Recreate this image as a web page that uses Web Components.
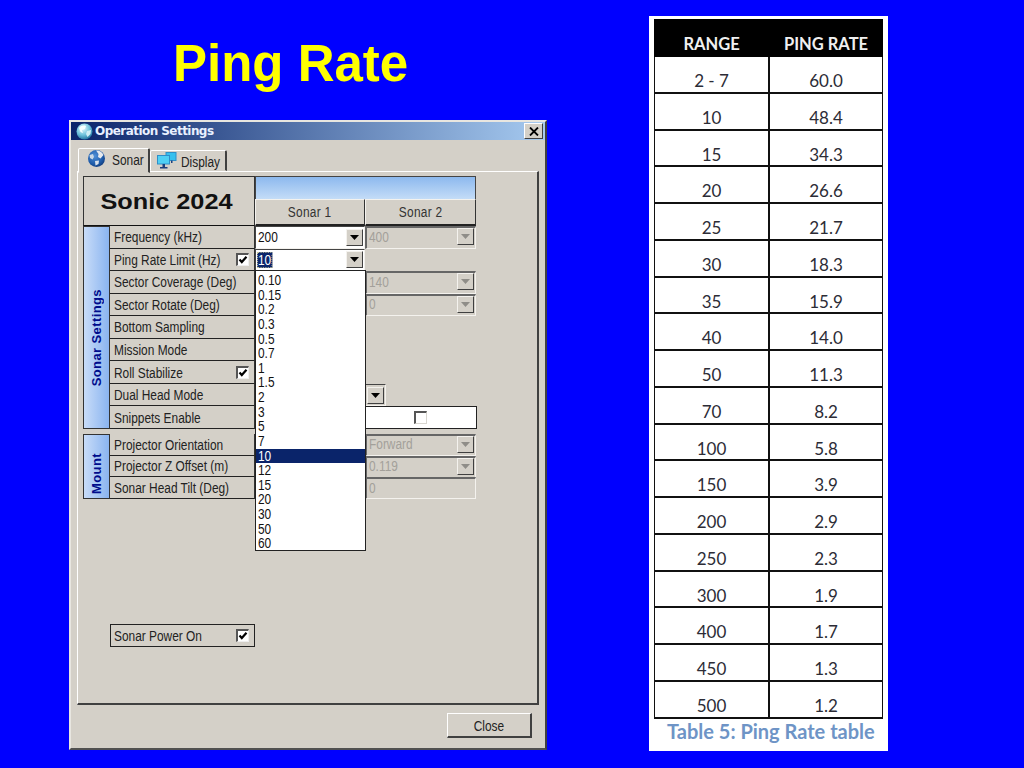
<!DOCTYPE html>
<html>
<head>
<meta charset="utf-8">
<title>Ping Rate</title>
<style>
	html, body { margin: 0; padding: 0; background: #0000ff; overflow: hidden; }
</style>
</head>
<body>

<ping-slide>
	<span slot="title">Ping Rate</span>

	<op-window slot="window" heading="Operation Settings">
		<settings-head title-text="Sonic 2024"></settings-head>

		<settings-group side="Sonar Settings" row-height="22.55" side-pad="21px 0 0 0">
			<set-row label="Frequency (kHz)"><combo-box value="200"></combo-box><combo-box value="400" disabled></combo-box></set-row>
			<set-row label="Ping Rate Limit (Hz)" checked>
				<combo-box value="10" focused><drop-list selected="10" items="0.10,0.15,0.2,0.3,0.5,0.7,1,1.5,2,3,5,7,10,12,15,20,30,50,60"></drop-list></combo-box>
			</set-row>
			<set-row label="Sector Coverage (Deg)"><combo-box value=""></combo-box><combo-box value="140" disabled></combo-box></set-row>
			<set-row label="Sector Rotate (Deg)"><combo-box value=""></combo-box><combo-box value="0" disabled></combo-box></set-row>
			<set-row label="Bottom Sampling"></set-row>
			<set-row label="Mission Mode"></set-row>
			<set-row label="Roll Stabilize" checked></set-row>
			<set-row label="Dual Head Mode"><combo-box value="" wide></combo-box></set-row>
			<set-row label="Snippets Enable"><tick-cell></tick-cell></set-row>
		</settings-group>

		<settings-group side="Mount" row-height="21.67" side-pad="15px 0 0 0" style="margin-top:5px">
			<set-row label="Projector Orientation"><combo-box value=""></combo-box><combo-box value="Forward" disabled></combo-box></set-row>
			<set-row label="Projector Z Offset (m)"><combo-box value=""></combo-box><combo-box value="0.119" disabled></combo-box></set-row>
			<set-row label="Sonar Head Tilt (Deg)"><combo-box value=""></combo-box><combo-box value="0" disabled plain></combo-box></set-row>
		</settings-group>

		<label-cell boxed checked style="margin:125px 0 0 27px">Sonar Power On</label-cell>
	</op-window>

	<ping-table slot="table" caption="Table 5: Ping Rate table"
		rows="2 - 7:60.0,10:48.4,15:34.3,20:26.6,25:21.7,30:18.3,35:15.9,40:14.0,50:11.3,70:8.2,100:5.8,150:3.9,200:2.9,250:2.3,300:1.9,400:1.7,450:1.3,500:1.2"></ping-table>
</ping-slide>

<script>
const UI_FONT = `"Liberation Sans", Arial, sans-serif`;
const GREY = '#d4d0c8';

// the dialog text in the shot is tall and thin, so it is 14px squeezed to the width of 12px
const SQUEEZE = `display: inline-block; white-space: nowrap; transform: scaleX(0.85); transform-origin: left center;`;

const ARROW = (c) => `<svg width="9" height="5" viewBox="0 0 9 5"><path d="M0 0H9L4.5 5Z" fill="${c}"/></svg>`;

const TICK = `<svg width="10" height="10" viewBox="0 0 10 10"><path d="M1.500 4.500L3.800 7 8.500 1.800" fill="none" stroke="#000" stroke-width="2.200"/></svg>`;

const GLOBE_SMALL = `<svg width="17" height="17" viewBox="0 0 17 17">
	<defs><radialGradient id="g1" cx="40%" cy="30%" r="75%"><stop offset="0" stop-color="#e8fbff"/><stop offset=".55" stop-color="#6fc4dc"/><stop offset="1" stop-color="#1c6f9c"/></radialGradient></defs>
	<circle cx="8.5" cy="8.5" r="8" fill="url(#g1)"/>
	<path d="M3 5C5 2.5 8 2 10 3L9 6 6 7 7 10 4.500 9Z" fill="#f4ffff"/>
	<path d="M11 8L15 7 14.500 11 11.500 14 10 11Z" fill="#cdeef5"/>
</svg>`;

const GLOBE_TAB = `<svg width="19" height="19" viewBox="0 0 19 19">
	<defs><radialGradient id="g2" cx="40%" cy="35%" r="70%"><stop offset="0" stop-color="#4f8fd8"/><stop offset=".7" stop-color="#1d5aa8"/><stop offset="1" stop-color="#123a78"/></radialGradient></defs>
	<circle cx="9.500" cy="9.500" r="8.500" fill="url(#g2)"/>
	<path d="M9 1.500C12 1 15.500 3 16.500 6L13.500 9.500 11 8 11.500 5Z" fill="#e6e9ee"/>
	<path d="M2.500 6L6 5 7 8 5.500 10.500 3 9Z" fill="#c9d7e6"/>
	<path d="M8 12L12 11.500 11.500 15 8.500 16.500Z" fill="#d9e2ec"/>
</svg>`;

const MONITORS = `<svg width="20" height="17" viewBox="0 0 20 17">
	<rect x="9" y="0.500" width="10" height="8" fill="#36c0ee" stroke="#2f8fc8"/>
	<rect x="0.500" y="3.500" width="12" height="8.500" fill="#4fd0f4" stroke="#2f8fc8"/>
	<rect x="5.500" y="12" width="2.500" height="3" fill="#1c3f7c"/>
	<rect x="3" y="15" width="7.500" height="1.500" fill="#1c3f7c"/>
	<rect x="14" y="8.500" width="1.500" height="2.500" fill="#1c3f7c"/>
</svg>`;

class PingSlide extends HTMLElement {

	constructor() {
		super();
		this.attachShadow({ mode: 'open' });
		this.shadowRoot.innerHTML = `
			<style>
				:host { display: flex; width: 1024px; height: 768px; background: #0000ff; overflow: hidden; }
				.left { width: 478px; margin-left: 69px; display: flex; flex-direction: column; }
				h1 {
					margin: 0; height: 120px; box-sizing: border-box; padding: 33px 0 0 104px;
					font: bold 51px/62px ${UI_FONT}; color: #ffff00; white-space: nowrap;
				}
				.right { margin: 16px 0 0 102px; }
			</style>
			<div class="left">
				<h1><slot name="title"></slot></h1>
				<slot name="window"></slot>
			</div>
			<div class="right"><slot name="table"></slot></div>
		`;
	}

}

class OpWindow extends HTMLElement {

	constructor() {
		super();
		this.attachShadow({ mode: 'open' });
		this.shadowRoot.innerHTML = `
			<style>
				:host {
					display: flex; flex-direction: column; box-sizing: border-box;
					width: 478px; height: 630px; background: ${GREY}; color: #222;
					border: 2px solid; border-color: #e8e6e0 #404040 #505050 #e8e6e0;
					font: 14px ${UI_FONT};
				}
				.bar {
					height: 18px; flex: none; display: flex; align-items: center; padding: 0 2px 0 5px;
					background: linear-gradient(90deg, #0a246a, #a6caf0);
					color: #e8f0ff; font: bold 12px "DejaVu Sans", sans-serif; gap: 2px;
				}
				.bar span { flex: 1; letter-spacing: -0.55px; }
				.close {
					width: 19px; height: 16px; box-sizing: border-box; background: ${GREY};
					border: 1px solid; border-color: #fff #404040 #404040 #fff;
					display: flex; align-items: center; justify-content: center;
				}
				.tabs { height: 31px; flex: none; display: flex; align-items: flex-end; padding-left: 7px; }
				.tab {
					box-sizing: border-box; display: flex; align-items: center; background: ${GREY};
					border: 1px solid; border-color: #fff #404040 transparent #fff; border-right-width: 2px;
					border-radius: 2px 2px 0 0;
				}
				.tab span { ${SQUEEZE} position: relative; top: 1px; flex: 1; width: 0; }
				.tab.on { height: 25px; width: 72px; margin-bottom: -2px; padding: 0 0 4px 8px; gap: 6px; position: relative; z-index: 1; }
				.tab.off { height: 21px; width: 77px; padding: 0 0 0 6px; gap: 4px; }
				.tab svg { flex: none; }
				.pane {
					flex: none; height: 534px; margin: 0 6px; box-sizing: border-box; padding: 4px 5px;
					border: 1px solid; border-color: #fff #404040 #404040 #fff; border-right-width: 2px; border-bottom-width: 2px;
					display: flex; flex-direction: column; align-items: flex-start;
				}
				.foot { flex: 1; display: flex; justify-content: flex-end; align-items: flex-start; padding: 8px 13px 0 0; }
				button {
					width: 85px; height: 25px; background: ${GREY}; color: #222; font: 14px ${UI_FONT}; padding: 2px 0 0;
					border: 1px solid; border-color: #fff #404040 #404040 #fff; border-bottom-width: 2px; border-right-width: 2px;
				}
				button span { ${SQUEEZE} transform-origin: center; }
			</style>
			<div class="bar">
				${GLOBE_SMALL}
				<span>${this.getAttribute('heading')}</span>
				<div class="close"><svg width="10" height="9" viewBox="0 0 10 9"><path d="M1 0.500L9 8.500M9 0.500L1 8.500" stroke="#000" stroke-width="1.800"/></svg></div>
			</div>
			<div class="tabs">
				<div class="tab on">${GLOBE_TAB}<span>Sonar</span></div>
				<div class="tab off">${MONITORS}<span>Display</span></div>
			</div>
			<div class="pane"><slot></slot></div>
			<div class="foot"><button><span>Close</span></button></div>
		`;
	}

}

class SettingsHead extends HTMLElement {

	constructor() {
		super();
		this.attachShadow({ mode: 'open' });
		this.shadowRoot.innerHTML = `
			<style>
				:host { display: grid; grid-template-columns: 172px 110px 111px; grid-template-rows: 23px 27px; width: 393px; }
				.name {
					grid-row: 1 / 3; box-sizing: border-box; border: 1px solid #333; border-bottom-color: #111;
					display: flex; align-items: center; justify-content: center; color: #111;
					font: bold 22px ${UI_FONT}; padding: 1px 6px 0 0;
				}
				.name span { display: block; transform: scaleX(1.15); white-space: nowrap; }
				.sky {
					grid-column: 2 / 4; box-sizing: border-box; border: 1px solid #444; border-bottom: 0;
					background: linear-gradient(180deg, #8db9ee, #c4dcf7);
				}
				.col {
					box-sizing: border-box; display: flex; align-items: center; justify-content: center; background: ${GREY};
					border: 1px solid; border-color: #f4f2ee #333 #222 #f4f2ee; border-bottom-width: 2px; color: #333;
				}
				.col span { ${SQUEEZE} transform-origin: center; letter-spacing: 0.3px; }
			</style>
			<div class="name"><span>${this.getAttribute('title-text')}</span></div>
			<div class="sky"></div>
			<div class="col"><span>Sonar 1</span></div>
			<div class="col"><span>Sonar 2</span></div>
		`;
	}

}

class SettingsGroup extends HTMLElement {

	constructor() {
		super();
		this.attachShadow({ mode: 'open' });
		this.shadowRoot.innerHTML = `
			<style>
				:host { display: flex; width: 393px; }
				.side {
					width: 27px; flex: none; box-sizing: border-box; border: 1px solid #333;
					background: linear-gradient(90deg, #c8dcf8, #8ab4f0);
					display: flex; align-items: center; justify-content: center;
					padding: ${this.getAttribute('side-pad')};
				}
				.side span {
					writing-mode: vertical-rl; transform: rotate(180deg); white-space: nowrap;
					font: bold 13px ${UI_FONT}; letter-spacing: 0.4px; color: #000c8c;
				}
				.rows { flex: 1; display: grid; grid-auto-rows: ${this.getAttribute('row-height')}px; }
			</style>
			<div class="side"><span>${this.getAttribute('side')}</span></div>
			<div class="rows"><slot></slot></div>
		`;
	}

}

class LabelCell extends HTMLElement {

	constructor() {
		super();
		this.attachShadow({ mode: 'open' });
		this.shadowRoot.innerHTML = `
			<style>
				:host {
					display: flex; align-items: center; box-sizing: border-box;
					width: 145px; height: 100%; padding: 1px 5px 0 4px; background: ${GREY}; color: #222;
					border-bottom: 1px solid #222; border-right: 1px solid #333; font-size: 14px;
				}
				:host([boxed]) { height: 23px; border: 1px solid #222; padding-left: 3px; }
				span { ${SQUEEZE} flex: 1; width: 0; }
				.box {
					width: 13px; height: 13px; flex: none; box-sizing: border-box; background: #fff;
					border: 1px solid; border-width: 2px 1px 1px 2px; border-color: #555 #eee #eee #555;
					display: flex; align-items: center; justify-content: center;
				}
			</style>
			<span><slot></slot></span>
			${this.hasAttribute('checked') ? `<div class="box">${TICK}</div>` : ''}
		`;
	}

}

class SetRow extends HTMLElement {

	constructor() {
		super();
		this.attachShadow({ mode: 'open' });
		const checked = this.hasAttribute('checked') ? 'checked' : '';
		this.shadowRoot.innerHTML = `
			<style>
				:host { display: grid; grid-template-columns: 145px 110px 111px; min-height: 0; }
				.cells { grid-column: 2 / 4; display: grid; grid-template-columns: 110px 111px; min-height: 0; }
			</style>
			<label-cell ${checked}>${this.getAttribute('label')}</label-cell>
			<div class="cells"><slot></slot></div>
		`;
	}

}

class ComboBox extends HTMLElement {

	constructor() {
		super();
		this.attachShadow({ mode: 'open' });
		const off = this.hasAttribute('disabled');
		const value = this.getAttribute('value');
		const text = this.hasAttribute('focused') ? `<b>${value}</b>` : value;
		this.shadowRoot.innerHTML = `
			<style>
				:host {
					display: flex; position: relative; box-sizing: border-box; min-width: 0; align-items: center;
					padding: 0 1px 0 2px; background: #fff; color: #111; font-size: 14px;
					border: 1px solid; border-color: #444 #f4f2ee #f4f2ee #444;
				}
				:host([disabled]) { background: ${GREY}; color: #a3a09a; border-color: #666 #f4f2ee #f4f2ee #666; border-top-width: 2px; border-left-width: 2px; padding-bottom: 2px; }
				:host([wide]) { width: 131px; background: ${GREY}; }
				.val { ${SQUEEZE} flex: 1; width: 0; }
				b { font-weight: normal; background: #0a246a; color: #fff; outline: 1px dotted #c8c8a0; outline-offset: -1px; padding: 0 1px; margin-left: -1px; }
				.btn {
					width: 17px; height: 17px; box-sizing: border-box; flex: none; background: ${GREY};
					border: 1px solid; border-color: #f4f2ee #404040 #404040 #f4f2ee; display: flex; align-items: center; justify-content: center;
				}
				::slotted(drop-list) { position: absolute; left: -1px; top: 100%; z-index: 5; }
			</style>
			<span class="val">${text}</span>
			${this.hasAttribute('plain') ? '' : `<div class="btn">${ARROW(off ? '#8f8d88' : '#000')}</div>`}
			<slot></slot>
		`;
	}

}

class TickCell extends HTMLElement {

	constructor() {
		super();
		this.attachShadow({ mode: 'open' });
		this.shadowRoot.innerHTML = `
			<style>
				:host {
					grid-column: 1 / -1; display: flex; align-items: center; justify-content: flex-end; box-sizing: border-box;
					background: #fff; border: 1px solid #222; padding-right: 49px; width: 222px;
				}
				.box { width: 13px; height: 13px; box-sizing: border-box; background: #fff; border: 1px solid; border-width: 2px 1px 1px 2px; border-color: #555 #d8d6d0 #d8d6d0 #555; }
			</style>
			<div class="box"></div>
		`;
	}

}

class DropList extends HTMLElement {

	constructor() {
		super();
		this.attachShadow({ mode: 'open' });
		const selected = this.getAttribute('selected');
		const items = this.getAttribute('items').split(',').map(v =>
			`<div class="${v === selected ? 'on' : ''}"><span>${v}</span></div>`).join('');
		this.shadowRoot.innerHTML = `
			<style>
				:host {
					display: block; width: 111px; height: 281px; box-sizing: border-box; background: #fff; color: #111;
					border: 1px solid #222; padding-top: 2px; font-size: 14px;
				}
				div { height: 14.63px; line-height: 14.63px; padding-left: 2px; }
				span { ${SQUEEZE} }
				.on { background: #0a246a; color: #fff; }
			</style>
			${items}
		`;
	}

}

class PingTable extends HTMLElement {

	constructor() {
		super();
		this.attachShadow({ mode: 'open' });
		const rows = this.getAttribute('rows').split(',').map(r => {
			const [range, rate] = r.split(':');
			return `<div class="c">${range}</div><div class="c r">${rate}</div>`;
		}).join('');
		this.shadowRoot.innerHTML = `
			<style>
				:host {
					display: block; width: 239px; height: 735px; box-sizing: border-box; padding: 3px 5px 0; background: #fff;
					font-family: Lato, sans-serif;
				}
				.head { display: grid; grid-template-columns: 115px 114px; height: 38px; background: #000; color: #f0f0f0; font-weight: bold; font-size: 16.500px; }
				.head div { text-align: center; padding-top: 15px; line-height: 20px; }
				.grid {
					display: grid; grid-template-columns: 113px 114px; grid-auto-rows: 36.78px; color: #2c2c36; font-size: 17px;
					border-left: 1px solid #111; border-right: 1px solid #111; margin: 0;
				}
				.c { text-align: center; border-bottom: 2px solid #111; box-sizing: border-box; padding-top: 14px; line-height: 20px; }
				.r { border-left: 2px solid #111; }
				.cap { color: #6e94c6; font-weight: bold; font-size: 20px; line-height: 24px; padding: 0 0 0 13px; white-space: nowrap; }
			</style>
			<div class="head"><div>RANGE</div><div>PING RATE</div></div>
			<div class="grid">${rows}</div>
			<div class="cap">${this.getAttribute('caption')}</div>
		`;
	}

}

customElements.define('label-cell', LabelCell);
customElements.define('ping-slide', PingSlide);
customElements.define('op-window', OpWindow);
customElements.define('settings-head', SettingsHead);
customElements.define('settings-group', SettingsGroup);
customElements.define('set-row', SetRow);
customElements.define('combo-box', ComboBox);
customElements.define('tick-cell', TickCell);
customElements.define('drop-list', DropList);
customElements.define('ping-table', PingTable);
</script>
</body>
</html>
